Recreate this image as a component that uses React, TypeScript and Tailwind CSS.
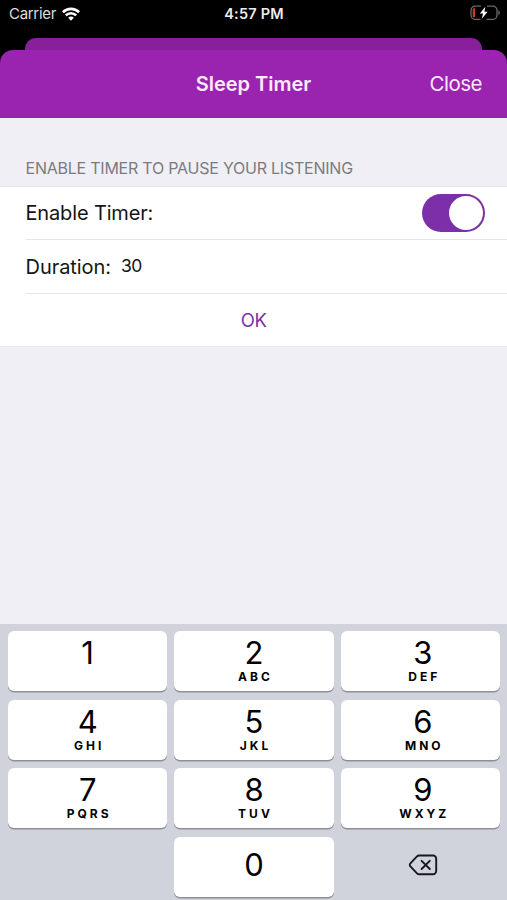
interface KeyItem {
  digit: string;
  letters?: string;
}

const KEYS: KeyItem[] = [
  { digit: '1' },
  { digit: '2', letters: 'ABC' },
  { digit: '3', letters: 'DEF' },
  { digit: '4', letters: 'GHI' },
  { digit: '5', letters: 'JKL' },
  { digit: '6', letters: 'MNO' },
  { digit: '7', letters: 'PQRS' },
  { digit: '8', letters: 'TUV' },
  { digit: '9', letters: 'WXYZ' },
];

function WifiIcon() {
  return (
    <svg width="18" height="14" viewBox="0 0 18 14" fill="none" stroke="#fff" strokeWidth="2.7">
      <path d="M0.9 5.2C5.5 0.7 12.5 0.7 17.1 5.2" />
      <path d="M3.8 8.4C6.7 5.5 11.3 5.5 14.2 8.4" />
      <path d="M9 13.7L6.2 10.8C7.7 9.2 10.3 9.2 11.8 10.8Z" fill="#fff" stroke="none" />
    </svg>
  );
}

function BatteryIcon() {
  return (
    <svg width="31" height="16" viewBox="0 0 31 16" fill="none">
      <path
        d="M11 1.2H5A4 4 0 0 0 1 5.2V10.3A4 4 0 0 0 5 14.3H10.5M17 1.2H23A4 4 0 0 1 27 5.2V10.3A4 4 0 0 1 23 14.3H16.5"
        stroke="#6a6a6a"
        strokeWidth="1.3"
      />
      <path d="M28.3 5.3C30.4 6.1 30.4 9.3 28.3 10.1Z" fill="#6a6a6a" />
      <path d="M5 3.2V12.3H4C3.2 12.3 2.7 11.7 2.7 11V4.5C2.7 3.8 3.2 3.2 4 3.2Z" fill="#c8362c" />
      <path d="M15.3 1.8L9.9 8.6H13L11.9 13.8L17.6 6.8H14.4Z" fill="#fff" />
    </svg>
  );
}

function BackspaceIcon() {
  return (
    <svg width="30" height="22" viewBox="0 0 30 22" fill="none" stroke="#16181c" strokeWidth="1.9" strokeLinecap="round" strokeLinejoin="round">
      <path d="M11.2 1.5H25A3.2 3.2 0 0 1 28.2 4.7V17.1A3.2 3.2 0 0 1 25 20.3H11.2A3 3 0 0 1 9 19.4L2.4 12.4A2.1 2.1 0 0 1 2.4 9.4L9 2.4A3 3 0 0 1 11.2 1.5Z" />
      <path d="M13.6 6.8L21.8 15M21.8 6.8L13.6 15" />
    </svg>
  );
}

function Key({ digit, letters }: KeyItem) {
  return (
    <button className="flex h-15 flex-col items-center rounded-md bg-white pt-1 text-black shadow-[0_1.5px_0_#8d9096] nth-[3n]:pl-[5px]">
      <span className="text-[31px] leading-[35px] font-normal">{digit}</span>
      {letters && (
        <span className="pl-[3px] text-[12px] leading-[14px] font-bold tracking-[3px]">{letters}</span>
      )}
    </button>
  );
}

export default function App() {
  return (
    <div className="flex h-[900px] w-[507px] flex-col overflow-hidden bg-black font-['Inter',sans-serif]">
      <div className="grid h-[38px] shrink-0 grid-cols-3 pr-[6px] pl-[9px] pt-[5px] text-white">
        <div className="flex h-[18px] items-center gap-[6px]">
          <span className="text-[15px] tracking-[-0.3px] text-[#dedede]">Carrier</span>
          <WifiIcon />
        </div>
        <div className="flex h-[18px] items-center justify-center pr-[2px] text-[14.5px] font-semibold tracking-[0.2px] text-[#ececec]">
          4:57 PM
        </div>
        <div className="flex h-[16px] items-center justify-end">
          <BatteryIcon />
        </div>
      </div>

      <div className="mx-[25px] h-3 shrink-0 rounded-t-[11px] bg-[#87209a]" />

      <header className="grid h-[68px] shrink-0 grid-cols-[1fr_auto_1fr] items-center rounded-t-[13px] bg-[#9a23af] px-[25px] text-[#fbe9fd]">
        <span />
        <h1 className="text-[20px] font-semibold">Sleep Timer</h1>
        <button className="justify-self-end text-[20.5px] tracking-[-0.5px]">Close</button>
      </header>

      <div className="flex flex-1 flex-col bg-[#f0eff5]">
        <h2 className="flex h-[69px] shrink-0 items-end border-b border-[#e3e2e7] pb-[6px] pl-[25.5px] text-[16px] tracking-[-0.23px] text-[#7b7b80]">
          ENABLE TIMER TO PAUSE YOUR LISTENING
        </h2>

        <section className="shrink-0 border-b border-[#e8e7ec] bg-white pl-[25.5px] text-[20px] text-[#141414]">
          <div className="flex h-[53px] items-center justify-between border-b border-[#e6e6e8] pr-[22px]">
            <span className="tracking-[-0.15px]">Enable Timer:</span>
            <button role="switch" aria-checked="true" className="flex h-[38px] w-[63px] items-center justify-end rounded-full bg-[#7c2fa8] pr-[2px]">
              <span className="size-[34px] rounded-full bg-white" />
            </button>
          </div>
          <div className="flex h-[54px] items-center gap-[10px] border-b border-[#e6e6e8]">
            <span className="tracking-[-0.05px]">Duration:</span>
            <span className="text-[17.5px] tracking-[-0.5px]">30</span>
          </div>
          <button className="flex h-[52px] w-full items-center justify-center pt-[2px] pr-[25px] text-[18.5px] tracking-[-0.3px] text-[#7c2fa8]">
            OK
          </button>
        </section>

        <div className="mt-auto h-[276px] shrink-0 bg-[#d0d3dc] pr-[7px] pl-2 pt-[7px]">
          <div className="grid grid-cols-3 gap-x-[7px] gap-y-[8.5px]">
            {KEYS.map((k) => (
              <Key key={k.digit} {...k} />
            ))}
            <button className="col-start-2 flex h-15 items-center justify-center rounded-md bg-white pb-[3px] text-[31px] leading-[34px] font-normal text-black shadow-[0_1.5px_0_#8d9096]">
              0
            </button>
            <button className="flex h-15 items-center justify-center pb-[3px] pl-[6px]">
              <BackspaceIcon />
            </button>
          </div>
        </div>
      </div>
    </div>
  );
}
